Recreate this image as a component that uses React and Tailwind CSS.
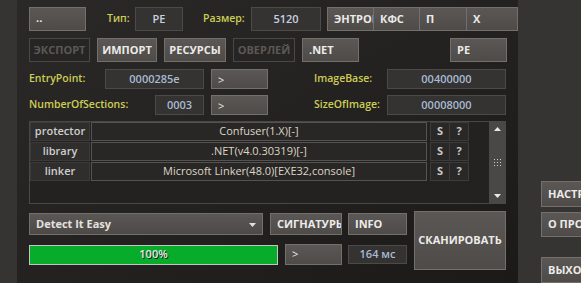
import React from 'react'

const font = { fontFamily: '"Open Sans", "Noto Sans", sans-serif' }

function Btn({ children, className = '', center = false, disabled = false }) {
  return (
    <div
      className={`flex items-center shrink-0 overflow-hidden whitespace-nowrap border text-[11px] font-bold ${
        center ? 'justify-center' : 'pl-[6px]'
      } ${
        disabled
          ? 'bg-[#262524] border-[#4a4846] text-[#5c5856]'
          : 'bg-gradient-to-b from-[#5a5754] to-[#4e4b48] border-[#73706c] text-[#ecebe9]'
      } ${className}`}
    >
      {children}
    </div>
  )
}

function Box({ children, className = '' }) {
  return (
    <div
      className={`flex items-center justify-center shrink-0 bg-[#343331] border border-[#4c4a48] text-[11px] font-semibold text-[#a9bad3] ${className}`}
    >
      {children}
    </div>
  )
}

function Label({ children, className = '' }) {
  return (
    <div className={`shrink-0 text-[10.5px] font-semibold text-[#cdcd55] ${className}`}>{children}</div>
  )
}

const rows = [
  { name: 'protector', value: 'Confuser(1.X)[-]' },
  { name: 'library', value: '.NET(v4.0.30319)[-]' },
  { name: 'linker', value: 'Microsoft Linker(48.0)[EXE32,console]' }
]

export default function App() {
  return (
    <div className="flex w-[581px] h-[283px] overflow-hidden bg-[#353432]" style={font}>
      <div className="w-[17px] shrink-0 bg-[#353432]" />

      <div className="w-[501px] shrink-0 h-full overflow-hidden bg-gradient-to-br from-[#2a2927] via-[#232220] to-[#1b1a19] pl-[12px] pt-[7px] flex flex-col">
        {/* row 1 */}
        <div className="flex items-center h-[24px]">
          <Btn className="w-[57px] h-[24px] items-end pb-[4px]">..</Btn>
          <Label className="ml-[21px] w-[28px]">Тип:</Label>
          <Box className="w-[48px] h-[24px] text-[#c9d2e2]">PE</Box>
          <Label className="ml-[20px] w-[48px]">Размер:</Label>
          <Box className="w-[70px] h-[24px] text-[#c9d2e2]">5120</Box>
          <Btn className="ml-[6px] w-[47px] h-[24px]">ЭНТРОПИЯ</Btn>
          <Btn className="w-[46px] h-[24px] border-l-0">КФС</Btn>
          <Btn className="w-[47px] h-[24px] border-l-0">П</Btn>
          <Btn className="w-[51px] h-[24px] border-l-0">Х</Btn>
        </div>

        {/* row 2 */}
        <div className="flex items-center h-[24px] mt-[7px] gap-[7px]">
          <Btn className="w-[61px] h-[24px]" center disabled>ЭКСПОРТ</Btn>
          <Btn className="w-[60px] h-[24px]" center>ИМПОРТ</Btn>
          <Btn className="w-[62px] h-[24px]" center>РЕСУРСЫ</Btn>
          <Btn className="w-[62px] h-[24px]" center disabled>ОВЕРЛЕЙ</Btn>
          <Btn className="w-[57px] h-[24px]">.NET</Btn>
          <Btn className="ml-[84px] w-[57px] h-[24px]">PE</Btn>
        </div>

        {/* row 3 */}
        <div className="flex items-center h-[20px] mt-[7px]">
          <Label className="w-[76px]">EntryPoint:</Label>
          <Box className="w-[99px] h-[20px]">0000285e</Box>
          <Btn className="ml-[7px] w-[57px] h-[20px] font-normal pt-[2px]">&gt;</Btn>
          <Label className="ml-[46px] w-[73px]">ImageBase:</Label>
          <Box className="w-[119px] h-[20px]">00400000</Box>
        </div>

        {/* row 4 */}
        <div className="flex items-center h-[20px] mt-[6px]">
          <Label className="w-[126px]">NumberOfSections:</Label>
          <Box className="w-[49px] h-[20px]">0003</Box>
          <Btn className="ml-[7px] w-[57px] h-[20px] font-normal pt-[2px]">&gt;</Btn>
          <Label className="ml-[46px] w-[73px]">SizeOfImage:</Label>
          <Box className="w-[119px] h-[20px]">00008000</Box>
        </div>

        {/* table */}
        <div className="mt-[6px] w-[477px] h-[83px] border border-[#4a4846] bg-[#232221] flex">
          <div className="flex-1 flex flex-col gap-[1px]">
            {rows.map((r) => (
              <div key={r.name} className="flex h-[19px] text-[11px]">
                <div className="w-[60px] shrink-0 flex items-center justify-center bg-[#2f2e2c] border border-[#3b3a38] font-semibold text-[#cfcfcf]">
                  {r.name}
                </div>
                <div className="ml-[1px] w-[336px] shrink-0 flex items-center justify-center bg-[#282725] border border-[#555351] text-[#ddd5c6]">
                  {r.value}
                </div>
                <div className="ml-[3px] w-[20px] shrink-0 flex items-center justify-center bg-[#292826] border border-[#3e3c3a] font-bold text-[#c9c9c9]">
                  S
                </div>
                <div className="w-[19px] shrink-0 flex items-center justify-center bg-[#292826] border border-[#3e3c3a] border-l-0 font-bold text-[#c9c9c9]">
                  ?
                </div>
              </div>
            ))}
          </div>
          <div className="w-[16px] shrink-0 bg-[#4a4846] flex flex-col items-center justify-between py-[5px]">
            <svg width="7" height="4" viewBox="0 0 7 4">
              <path d="M0 4 L3.5 0 L7 4 Z" fill="#e8e8e8" />
            </svg>
            <svg width="7" height="7" viewBox="0 0 7 7">
              {[0, 3, 6].map((y) =>
                [0, 3, 6].map((x) => <rect key={`${x}-${y}`} x={x} y={y} width="1" height="1" fill="#d0d0d0" />)
              )}
            </svg>
            <svg width="7" height="4" viewBox="0 0 7 4">
              <path d="M0 0 L7 0 L3.5 4 Z" fill="#e8e8e8" />
            </svg>
          </div>
        </div>

        {/* bottom */}
        <div className="flex mt-[7px] gap-[7px]">
          <div className="w-[378px] shrink-0 flex flex-col">
            <div className="flex mt-[2px] h-[22px]">
              <div className="w-[234px] h-[22px] flex items-center justify-between pl-[6px] pr-[6px] bg-gradient-to-b from-[#5a5754] to-[#4c4946] border border-[#73706c] text-[11px] font-bold text-[#e3e2e0]">
                <span>Detect It Easy</span>
                <svg width="7" height="4" viewBox="0 0 7 4" className="mt-[2px]">
                  <path d="M0 0 L7 0 L3.5 4 Z" fill="#e0e0e0" />
                </svg>
              </div>
              <Btn className="ml-[7px] w-[72px] h-[22px]">СИГНАТУРЫ</Btn>
              <Btn className="ml-[6px] w-[59px] h-[22px]">INFO</Btn>
            </div>
            <div className="flex items-center mt-[9px] h-[21px]">
              <div className="w-[249px] h-[20px] flex items-center justify-center bg-[#07ad2a] border border-[#c4c4c4] text-[11px] font-semibold text-[#eaeaea] [text-shadow:1px_1px_0_#1a1a1a]">
                100%
              </div>
              <Btn className="ml-[7px] w-[57px] h-[21px] font-normal">&gt;</Btn>
              <Box className="ml-[6px] w-[59px] h-[19px]">164 мс</Box>
            </div>
          </div>
          <Btn className="w-[92px] h-[59px]" center>СКАНИРОВАТЬ</Btn>
        </div>
      </div>

      <div className="flex-1 bg-[#353432] pl-[23px] pt-[181px] flex flex-col overflow-hidden">
        <Btn className="w-[80px] h-[26px]">НАСТРОЙКИ</Btn>
        <Btn className="mt-[5px] w-[80px] h-[25px]">О ПРОГРАММЕ</Btn>
        <Btn className="mt-[20px] w-[80px] h-[26px]">ВЫХОД</Btn>
      </div>
    </div>
  )
}
